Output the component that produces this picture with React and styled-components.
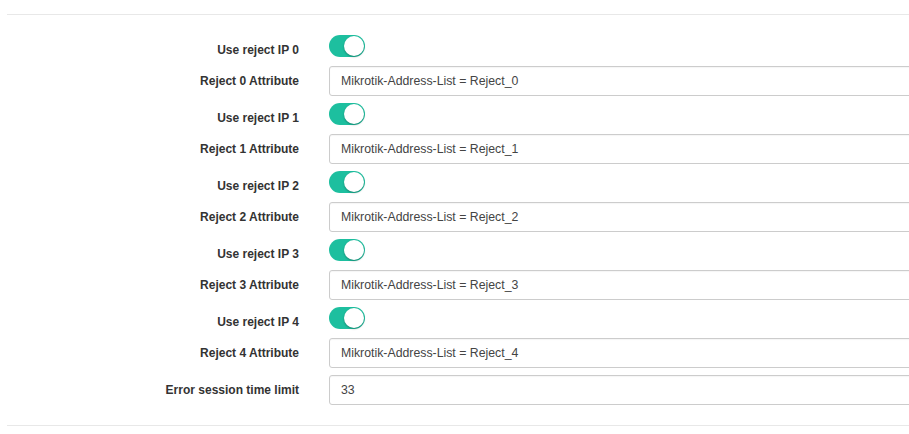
import React from "react";
import styled, { createGlobalStyle } from "styled-components";

const Global = createGlobalStyle`
  html, body { margin: 0; padding: 0; background: #fff; overflow: hidden; }
  body { font-family: "Liberation Sans", Arial, sans-serif; }
`;

const Section = styled.section`
  margin: 14px 0 0 7px;
  width: 940px;
  border-top: 1px solid #e8e8e8;
  border-bottom: 1px solid #e8e8e8;
  padding: 20px 0 20px;
`;

const Row = styled.div`
  display: grid;
  grid-template-columns: 292px 1fr;
  column-gap: 30px;
  align-items: center;
  height: ${(p) => (p.$toggle ? "22px" : "30px")};
  margin-bottom: ${(p) => (p.$toggle ? "9px" : "7px")};
  &:last-child { margin-bottom: 0; }
`;

const Label = styled.label`
  text-align: right;
  font-size: 12px;
  font-weight: bold;
  color: #333;
  padding-top: ${(p) => (p.$toggle ? "4px" : "0")};
`;

const Input = styled.input`
  box-sizing: border-box;
  height: 30px;
  width: 100%;
  border: 1px solid #ccc;
  border-radius: 3px;
  padding: 0 11px;
  font-family: "Liberation Sans", Arial, sans-serif;
  font-size: 12.3px;
  color: #444;
  background: #fff;
  box-shadow: inset 0 1px 1px rgba(0,0,0,0.04);
  outline: none;
`;

const Switch = styled.span`
  position: relative;
  display: inline-block;
  width: 36px;
  height: 22px;
  border-radius: 11px;
  background: ${(p) => (p.$on ? "#1dbf9f" : "#ddd")};
`;

const Knob = styled.span`
  position: absolute;
  top: 1px;
  left: ${(p) => (p.$on ? "15px" : "1px")};
  width: 20px;
  height: 20px;
  border-radius: 50%;
  background: #fff;
  box-shadow: 0 1px 2px rgba(0,0,0,0.3);
`;

const Toggle = ({ on }) => (
  <Switch $on={on}>
    <Knob $on={on} />
  </Switch>
);

export default function App() {
  const items = [0, 1, 2, 3, 4];
  return (
    <>
      <Global />
      <Section>
        {items.map((i) => (
          <React.Fragment key={i}>
            <Row $toggle>
              <Label $toggle>Use reject IP {i}</Label>
              <div><Toggle on /></div>
            </Row>
            <Row>
              <Label>Reject {i} Attribute</Label>
              <Input readOnly value={`Mikrotik-Address-List = Reject_${i}`} />
            </Row>
          </React.Fragment>
        ))}
        <Row>
          <Label>Error session time limit</Label>
          <Input readOnly value="33" />
        </Row>
      </Section>
    </>
  );
}
